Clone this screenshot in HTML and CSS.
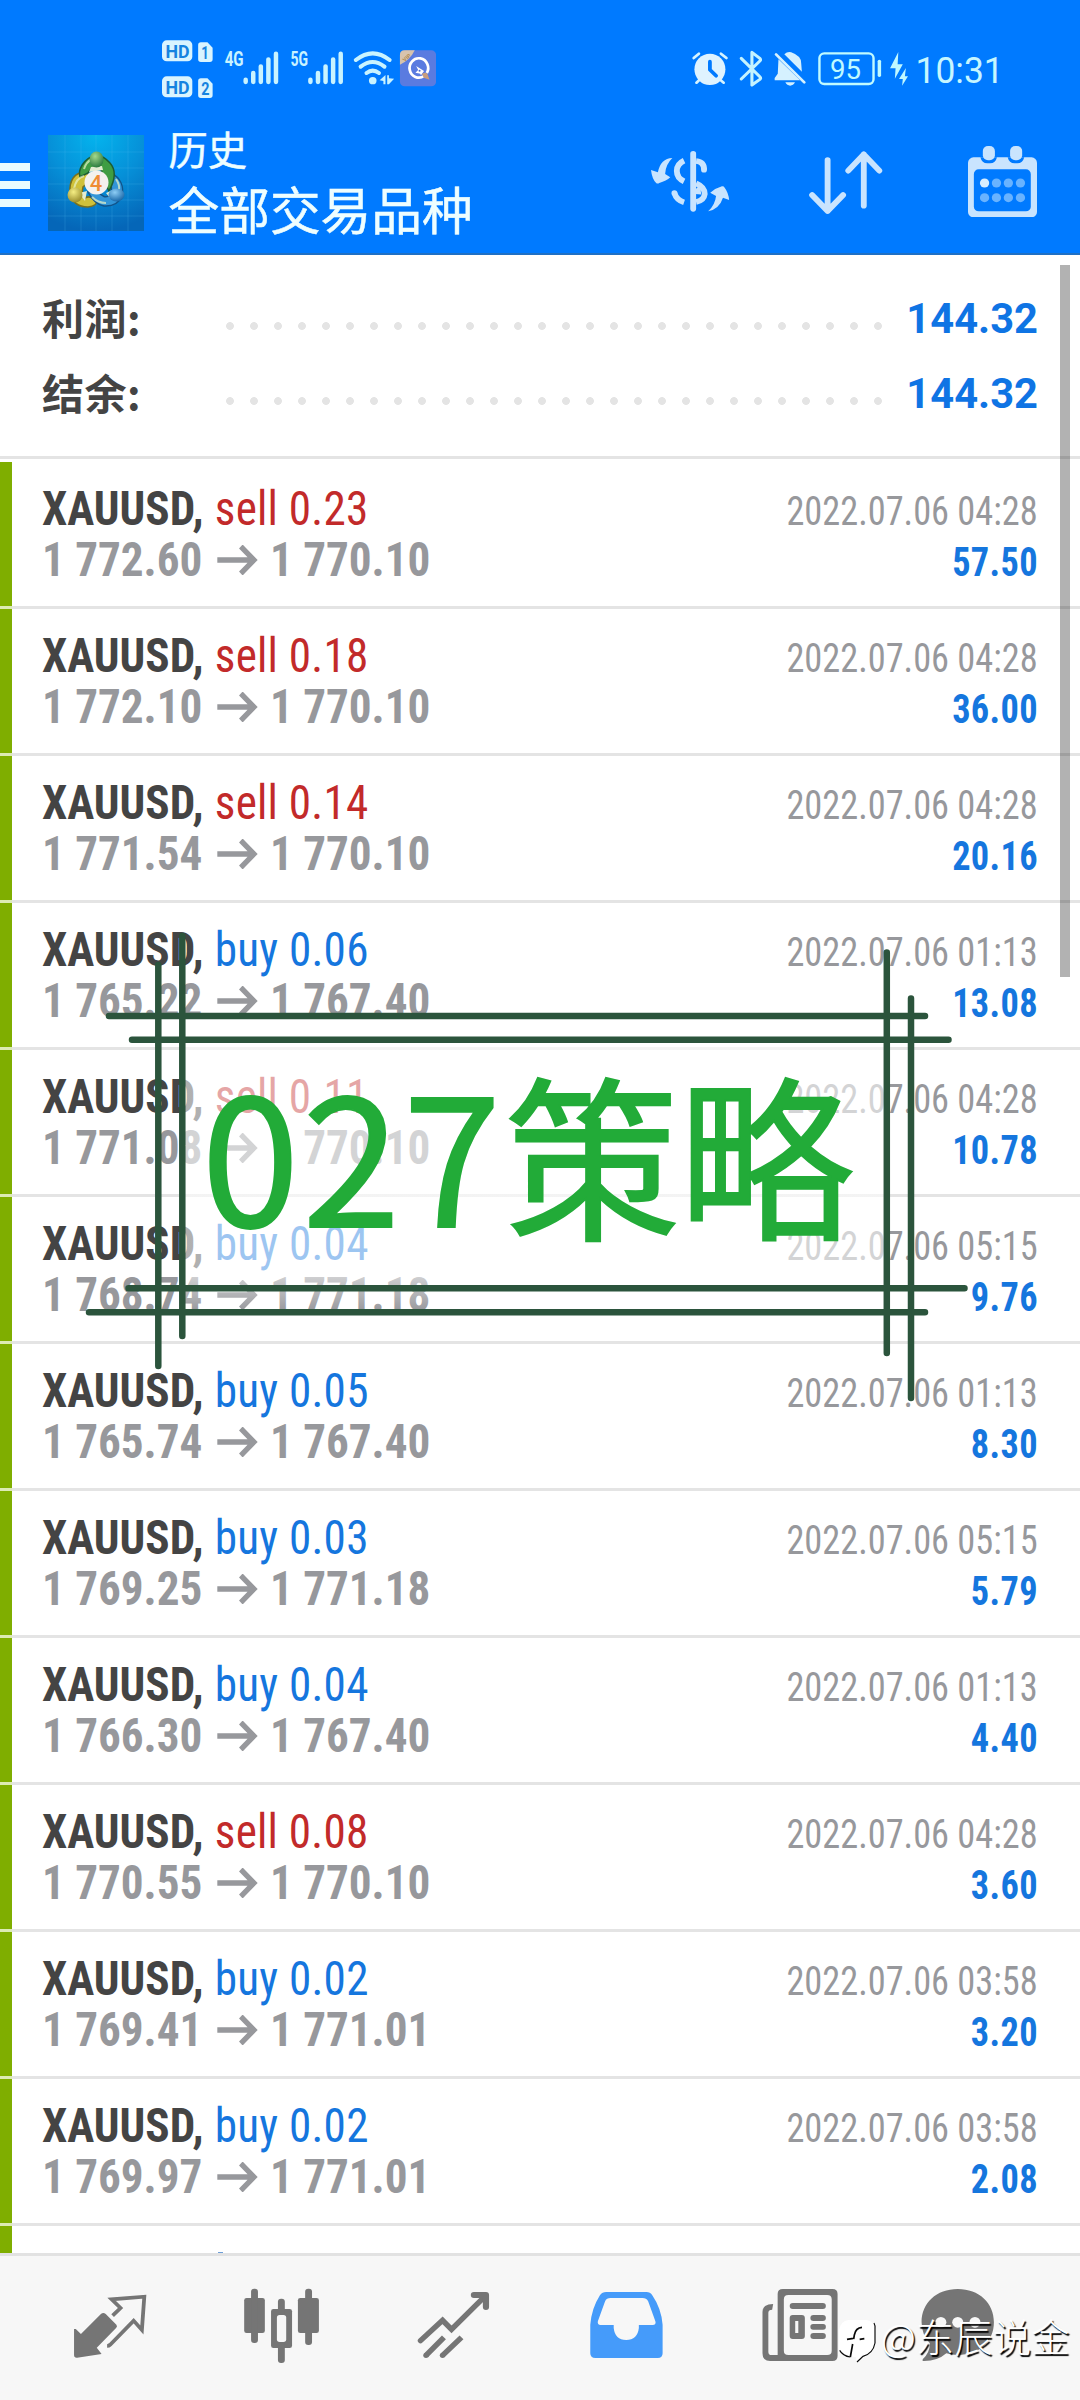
FILE: index.html
```html
<!DOCTYPE html>
<html lang="zh-CN">
<head>
<meta charset="utf-8">
<title>历史</title>
<link rel="stylesheet" href="styles.css">
</head>
<body>
<div class="screen">
<header class="top">
  <div class="status">
    <svg class="status-left" viewBox="470 50 796 190" preserveAspectRatio="none">
      <g fill="#d9f4ff">
        <rect x="470" y="60" width="88" height="63" rx="14"/><rect x="470" y="168" width="88" height="63" rx="14"/>
        <path d="M583 66H602L617 82V117Q617 125 609 125H583Q575 125 575 117V74Q575 66 583 66ZM583 174H602L617 190V225Q617 233 609 233H583Q575 233 575 225V182Q575 174 583 174Z"/>
      </g>
      <g class="badge-text">
        <text x="480" y="112" textLength="70" lengthAdjust="spacingAndGlyphs">HD</text><text x="584" y="115" textLength="22" lengthAdjust="spacingAndGlyphs">1</text>
        <text x="480" y="220" textLength="70" lengthAdjust="spacingAndGlyphs">HD</text><text x="584" y="223" textLength="24" lengthAdjust="spacingAndGlyphs">2</text>
      </g>
      <g class="net-text">
        <text x="652" y="137" textLength="55" lengthAdjust="spacingAndGlyphs">4G</text><text x="843" y="137" textLength="51" lengthAdjust="spacingAndGlyphs">5G</text>
      </g>
      <g stroke="#c9f3ff" stroke-width="13" stroke-linecap="round">
        <path d="M713 178v7M735 158v27M757 138v47M779 117v68M801 100v85M901 178v7M923 158v27M945 138v47M967 117v68M989 100v85"/>
      </g>
      <g fill="none" stroke="#c9f3ff" stroke-width="12" stroke-linecap="round">
        <path d="M1033 119Q1082 79 1131 119M1047 139Q1082 111 1116 139M1064 158Q1082 144 1100 158"/>
      </g>
      <circle cx="1082" cy="181" r="11" fill="#c9f3ff"/>
      <path d="M1102 180L1119 164V192H1113V182ZM1124 165H1129V174L1144 175 1129 192H1124Z" fill="#c9f3ff"/>
      <rect x="1161" y="90" width="105" height="108" rx="14" fill="#5a7be0"/>
      <path d="M1161 133V104Q1161 90 1175 90H1204Q1190 120 1161 133Z" fill="#d7c3ae"/>
      <text class="vip" x="1167" y="121" transform="rotate(-42 1176 112)">VIP</text>
      <path d="M1231 167A27 29 0 1 1 1239 158" fill="none" stroke="#fff" stroke-width="8"/>
      <path d="M1208 137L1231 152 1222 165ZM1206 157L1214 149 1221 160Z" fill="#fff"/><circle cx="1218" cy="151" r="3" fill="#4d6ed4"/>
      <path d="M1225 160Q1240 153 1242 164L1247 178 1230 172Z" fill="#c89d7d"/>
    </svg>
    <svg class="status-right" viewBox="440 90 900 110" preserveAspectRatio="none">
      <g stroke="#d5f3ff" stroke-width="8" stroke-linecap="round"><path d="M445 114L460 101M524 101L540 114M453 188L463 178M532 188L520 178"/></g>
      <ellipse cx="492" cy="148" rx="45" ry="47" fill="#dff3ff"/>
      <path d="M492 125V149L510 167" fill="none" stroke="#007aff" stroke-width="11" stroke-linecap="round" stroke-linejoin="round"/>
      <path d="M583 115L637 170Q641 174 637 178L614 195V97L637 115Q641 119 637 123L583 177" fill="none" stroke="#c4f3ff" stroke-width="9" stroke-linecap="round" stroke-linejoin="round"/>
      <path d="M691 118L754 181H680V174L689 161ZM708 103Q717 94 728 97Q758 108 757 130L759 155ZM711 187H739Q734 197 725 197Q716 197 711 187Z" fill="#d5f1ff"/>
      <path d="M684 103L766 187" stroke="#d5f1ff" stroke-width="8" stroke-linecap="round"/>
      <rect x="810" y="100" width="157" height="92" rx="14" fill="none" stroke="#c0faff" stroke-width="7"/>
      <path d="M984 124v42" stroke="#c0faff" stroke-width="10" stroke-linecap="round"/>
      <text class="battery" x="841" y="176" textLength="90" lengthAdjust="spacingAndGlyphs">95</text>
      <path d="M1039 96L1015 145H1031L1029 176 1052 133H1037ZM1061 144L1041 177H1052L1050 197 1067 169H1058Z" fill="#c0f8ff"/>
      <text class="clock" x="1089" y="189" textLength="256" lengthAdjust="spacingAndGlyphs">10:31</text>
    </svg>
  </div>
  <div class="appbar">
    <div class="burger"><i></i><i></i><i></i></div>
    <svg class="logo" viewBox="0 0 96 96">
      <defs>
        <radialGradient id="sky" cx=".5" cy="0" r="1"><stop offset="0" stop-color="#04b4ee"/><stop offset=".5" stop-color="#0690d8"/><stop offset="1" stop-color="#0566b8"/></radialGradient>
        <radialGradient id="grn" cx=".4" cy=".3" r=".8"><stop offset="0" stop-color="#a5d98c"/><stop offset="1" stop-color="#1c6f35"/></radialGradient>
        <radialGradient id="yel" cx=".4" cy=".3" r=".8"><stop offset="0" stop-color="#f5ee84"/><stop offset="1" stop-color="#8d8020"/></radialGradient>
        <radialGradient id="blu" cx=".4" cy=".3" r=".8"><stop offset="0" stop-color="#8dcdf5"/><stop offset="1" stop-color="#0a5a9e"/></radialGradient>
      </defs>
      <rect width="96" height="96" fill="url(#sky)"/>
      <path d="M0 17H96M0 33H96M0 49H96M0 65H96M0 81H96M17 0V96M33 0V96M48 0V96M64 0V96M80 0V96" stroke="#5cc2f0" stroke-opacity=".2"/>
      <path d="M38 37C26 37 21 46 22 58Q25 72 40 72Q50 71 48 65Q42 60 37 63Q33 60 35 52L44 44Z" fill="#cfc13a" stroke="#77701f" stroke-width="1.500"/>
      <path d="M63 38C73 43 76 52 74 61Q69 72 56 71Q46 69 40 57L50 56Q56 65 62 60Q66 52 60 46Z" fill="#3295d8" stroke="#12548a" stroke-width="1.500"/>
      <path d="M48 20C34 24 30 36 32 42L40 38Q44 32 49 32Q55 33 55 45L61 56Q71 38 62 28Q56 21 48 20Z" fill="#3f9d43" stroke="#1d5c34" stroke-width="1.500"/>
      <path d="M36 34Q38 27 44 24M26 54Q28 43 36 41M68 44Q72 50 71 55M44 62Q50 68 58 68" fill="none" stroke="#e8f4c8" stroke-opacity=".7" stroke-width="2"/>
      <path d="M41 37L55 35 54 31 43 32ZM31 58L37 66 39 56ZM58 58L65 55 62 63Z" fill="#e4ecd0"/>
      <ellipse cx="48.500" cy="24.500" rx="7" ry="8" fill="url(#grn)"/>
      <ellipse cx="27" cy="60" rx="7.500" ry="7.500" fill="url(#yel)"/>
      <ellipse cx="68.500" cy="60" rx="8" ry="6.500" fill="url(#blu)"/>
      <circle cx="48.500" cy="47.500" r="12" fill="#f3f1ee"/>
      <text class="four" x="48" y="55.500" text-anchor="middle">4</text>
    </svg>
    <div class="titles"><div class="title-sm">历史</div><div class="title-lg">全部交易品种</div></div>
    <svg class="ic-dollar" viewBox="322 392 228 183" preserveAspectRatio="none" fill="#c9e4fe">
      <path d="M384 413Q350 414 342 456L322 449Q325 476 337 488Q341 491 346 488Q367 482 378 471L363 461Q364 433 384 413ZM488 573Q521 565 531 532L549 539Q547 517 536 502Q533 497 528 498Q508 504 494 517L511 527Q508 554 488 573Z"/>
      <rect x="436" y="392" width="17" height="182" rx="8.500"/>
      <path d="M418 421Q397 431 397 452Q397 473 418 483M390 518Q396 539 418 546M453 422Q477 425 476 448M453 489Q478 500 478 521Q476 540 453 545M453 505Q460 512 459 522" fill="none" stroke="#c9e4fe" stroke-width="17"/><circle cx="390" cy="518" r="8.500"/><circle cx="476" cy="448" r="8.500"/>
    </svg>
    <svg class="ic-sort" viewBox="782 392 213 190" preserveAspectRatio="none" fill="none" stroke="#c9e4fe" stroke-width="17" stroke-linecap="round" stroke-linejoin="round">
      <path d="M836 419V572M791 524L836 572 881 524M941 556V402M896 451L941 402 986 451"/>
    </svg>
    <svg class="ic-cal" viewBox="1243 377 200 214" preserveAspectRatio="none">
      <rect x="1243" y="411" width="200" height="180" rx="16" fill="#c9e4fe"/>
      <rect x="1260" y="447" width="165" height="126" rx="14" fill="#007aff"/>
      <path d="M1279 411H1327Q1323 429 1307 429H1299Q1283 429 1279 411ZM1358 411H1406Q1402 429 1386 429H1378Q1362 429 1358 411Z" fill="#007aff"/>
      <rect x="1286" y="377" width="35" height="43" rx="15" fill="#c9e4fe"/><rect x="1365" y="377" width="35" height="43" rx="15" fill="#c9e4fe"/>
      <circle cx="1291" cy="488" r="13.500" fill="#d8eeff"/>
      <g fill="#69b3ff"><circle cx="1325.500" cy="488" r="13.500"/><circle cx="1360" cy="488" r="13.500"/><circle cx="1395" cy="488" r="13.500"/><circle cx="1291" cy="532" r="13.500"/><circle cx="1325.500" cy="532" r="13.500"/><circle cx="1360" cy="532" r="13.500"/><circle cx="1395" cy="532" r="13.500"/></g>
    </svg>
  </div>
</header>

<section class="summary">
  <div class="sum-row"><span class="sum-label">利润:</span><span class="dots"></span><span class="sum-value">144.32</span></div>
  <div class="sum-row"><span class="sum-label">结余:</span><span class="dots"></span><span class="sum-value">144.32</span></div>
</section>

<main class="deals">
  <div class="deal"><div class="left"><div class="l1"><b>XAUUSD,</b> <span class="sell">sell 0.23</span></div><div class="l2">1 772.60<svg class="arr" viewBox="0 0 42 30"><path d="M0 15H38M25 1.500L39 15 25 28.500"/></svg>1 770.10</div></div><div class="right"><div class="date">2022.07.06 04:28</div><div class="profit">57.50</div></div></div>
  <div class="deal"><div class="left"><div class="l1"><b>XAUUSD,</b> <span class="sell">sell 0.18</span></div><div class="l2">1 772.10<svg class="arr" viewBox="0 0 42 30"><path d="M0 15H38M25 1.500L39 15 25 28.500"/></svg>1 770.10</div></div><div class="right"><div class="date">2022.07.06 04:28</div><div class="profit">36.00</div></div></div>
  <div class="deal"><div class="left"><div class="l1"><b>XAUUSD,</b> <span class="sell">sell 0.14</span></div><div class="l2">1 771.54<svg class="arr" viewBox="0 0 42 30"><path d="M0 15H38M25 1.500L39 15 25 28.500"/></svg>1 770.10</div></div><div class="right"><div class="date">2022.07.06 04:28</div><div class="profit">20.16</div></div></div>
  <div class="deal"><div class="left"><div class="l1"><b>XAUUSD,</b> <span class="buy">buy 0.06</span></div><div class="l2">1 765.22<svg class="arr" viewBox="0 0 42 30"><path d="M0 15H38M25 1.500L39 15 25 28.500"/></svg>1 767.40</div></div><div class="right"><div class="date">2022.07.06 01:13</div><div class="profit">13.08</div></div></div>
  <div class="deal"><div class="left"><div class="l1"><b>XAUUSD,</b> <span class="sell">sell 0.11</span></div><div class="l2">1 771.08<svg class="arr" viewBox="0 0 42 30"><path d="M0 15H38M25 1.500L39 15 25 28.500"/></svg>1 770.10</div></div><div class="right"><div class="date">2022.07.06 04:28</div><div class="profit">10.78</div></div></div>
  <div class="deal"><div class="left"><div class="l1"><b>XAUUSD,</b> <span class="buy">buy 0.04</span></div><div class="l2">1 768.74<svg class="arr" viewBox="0 0 42 30"><path d="M0 15H38M25 1.500L39 15 25 28.500"/></svg>1 771.18</div></div><div class="right"><div class="date">2022.07.06 05:15</div><div class="profit">9.76</div></div></div>
  <div class="deal"><div class="left"><div class="l1"><b>XAUUSD,</b> <span class="buy">buy 0.05</span></div><div class="l2">1 765.74<svg class="arr" viewBox="0 0 42 30"><path d="M0 15H38M25 1.500L39 15 25 28.500"/></svg>1 767.40</div></div><div class="right"><div class="date">2022.07.06 01:13</div><div class="profit">8.30</div></div></div>
  <div class="deal"><div class="left"><div class="l1"><b>XAUUSD,</b> <span class="buy">buy 0.03</span></div><div class="l2">1 769.25<svg class="arr" viewBox="0 0 42 30"><path d="M0 15H38M25 1.500L39 15 25 28.500"/></svg>1 771.18</div></div><div class="right"><div class="date">2022.07.06 05:15</div><div class="profit">5.79</div></div></div>
  <div class="deal"><div class="left"><div class="l1"><b>XAUUSD,</b> <span class="buy">buy 0.04</span></div><div class="l2">1 766.30<svg class="arr" viewBox="0 0 42 30"><path d="M0 15H38M25 1.500L39 15 25 28.500"/></svg>1 767.40</div></div><div class="right"><div class="date">2022.07.06 01:13</div><div class="profit">4.40</div></div></div>
  <div class="deal"><div class="left"><div class="l1"><b>XAUUSD,</b> <span class="sell">sell 0.08</span></div><div class="l2">1 770.55<svg class="arr" viewBox="0 0 42 30"><path d="M0 15H38M25 1.500L39 15 25 28.500"/></svg>1 770.10</div></div><div class="right"><div class="date">2022.07.06 04:28</div><div class="profit">3.60</div></div></div>
  <div class="deal"><div class="left"><div class="l1"><b>XAUUSD,</b> <span class="buy">buy 0.02</span></div><div class="l2">1 769.41<svg class="arr" viewBox="0 0 42 30"><path d="M0 15H38M25 1.500L39 15 25 28.500"/></svg>1 771.01</div></div><div class="right"><div class="date">2022.07.06 03:58</div><div class="profit">3.20</div></div></div>
  <div class="deal"><div class="left"><div class="l1"><b>XAUUSD,</b> <span class="buy">buy 0.02</span></div><div class="l2">1 769.97<svg class="arr" viewBox="0 0 42 30"><path d="M0 15H38M25 1.500L39 15 25 28.500"/></svg>1 771.01</div></div><div class="right"><div class="date">2022.07.06 03:58</div><div class="profit">2.08</div></div></div>
  <div class="deal next"><span class="tip"></span></div>
</main>

<nav class="tabs">
  <svg viewBox="69.700 168 499.400 432" preserveAspectRatio="none" fill="#757575">
    <path d="M215 387H220L235 402 293 342Q300 336 307 342L338 374Q342 379 337 384L281 443 295 462 224 473Q215 474 215 465Z"/>
    <path d="M327 347L350 324 324 298 419 290 412 390 388 362 320 434Q316 438 311 438" fill="none" stroke="#757575" stroke-width="11"/>
  </svg>
  <svg viewBox="569.100 168 499.400 432" preserveAspectRatio="none" fill="#757575">
    <rect x="709" y="294" width="60" height="105" rx="7"/><rect x="729" y="266" width="20" height="163" rx="9"/>
    <rect x="865" y="294" width="61" height="105" rx="7"/><rect x="886" y="266" width="20" height="169" rx="9"/>
    <rect x="787" y="327" width="61" height="117" rx="7"/><rect x="807" y="296" width="20" height="193" rx="9"/><rect x="804" y="345" width="27" height="81" rx="8" fill="#f7f7f7"/>
  </svg>
  <svg viewBox="1068.500 168 499.400 432" preserveAspectRatio="none" fill="none" stroke="#757575" stroke-width="16">
    <path d="M1221 422L1285 361 1311 388 1410 287" stroke-linecap="round"/><path d="M1376 285H1411V321" stroke-width="18" stroke-linecap="round" stroke-linejoin="round"/>
    <path d="M1237 466L1289 412M1285 466L1340 412"/><g fill="#757575" stroke="none"><circle cx="1237" cy="466" r="8"/><circle cx="1285" cy="466" r="8"/></g>
  </svg>
  <svg viewBox="0 168 499.400 432" preserveAspectRatio="none">
    <path fill="#459bfa" fill-rule="evenodd" d="M192 276H309Q320 276 326 286Q352 325 356 374V460Q356 474 342 474H161Q146 474 146 460V374Q150 325 174 286Q181 276 192 276ZM205 294Q193 294 189 304L168 364Q166 375 176 375H214V384Q218 420 250 420Q283 420 287 384V375H327Q338 375 335 364L314 304Q309 294 298 294Z"/>
  </svg>
  <svg viewBox="499.400 168 499.400 432" preserveAspectRatio="none" fill="#757575">
    <path fill-rule="evenodd" d="M705 267H849Q864 267 864 282V468Q864 483 849 483H668Q646 483 646 460V335Q646 312 677 312L674 329Q663 329 663 338V455Q663 465 672 465H690V282Q690 267 705 267ZM721 285Q708 285 708 298V452Q708 465 721 465H834Q847 465 847 452V298Q847 285 834 285Z"/>
    <rect x="725" y="309" width="105" height="18" rx="9"/><path fill-rule="evenodd" d="M734 345H760Q769 345 769 354V408Q769 417 760 417H734Q725 417 725 408V354Q725 345 734 345ZM741 363V399H750V363Z"/>
    <rect x="785" y="345" width="45" height="18" rx="9"/><rect x="785" y="372" width="45" height="17" rx="8"/><rect x="785" y="399" width="45" height="18" rx="9"/>
  </svg>
  <svg viewBox="998.900 168 499.400 432" preserveAspectRatio="none">
    <path d="M1213 267C1275 267 1318 309 1318 367C1318 425 1275 465 1213 465Q1197 465 1180 460Q1155 483 1115 483Q1108 483 1112 477Q1132 458 1132 430Q1108 403 1108 367C1108 309 1151 267 1213 267Z" fill="#757575"/>
    <g fill="#f7f7f7"><circle cx="1164" cy="367" r="16"/><circle cx="1213" cy="367" r="16"/><circle cx="1263" cy="367" r="16"/></g>
  </svg>
</nav>

<div class="scrollbar"></div>
<div class="veil"></div>
<div class="strategy"><span class="num">027</span>策略</div>
<svg class="frame" viewBox="80 925 900 485" fill="none" stroke="#2b543c" stroke-width="6.500" stroke-linecap="round">
  <path d="M109 1016H925M132 1039.700H948.500M128.500 1288.300H964.500M89 1312.300H925M158.300 965V1366M182.300 936V1336M886.800 952.500V1353M911 998.500V1398"/>
</svg>
<div class="watermark">
  <svg viewBox="55 55 117 137">
    <path d="M86 61H140Q165 64 166 90V130Q160 164 130 170L112 187 108 172Q70 172 58 150V92Q62 64 86 61Z" fill="#fff"/>
    <path d="M163 70Q167 76 166 90V130Q160 162 130 170L112 187M60 152Q70 169 92 172" fill="none" stroke="#0a0a0a" stroke-width="3.500"/>
    <path d="M127 83Q108 84 104 106L102 118M82 119L101 116M120 119L134 117M99 133L92 172" fill="none" stroke="#0a0a0a" stroke-width="5"/>
  </svg>
  <span>@东辰说金</span>
</div>
</div>
</body>
</html>
```
FILE: styles.css
```css
* { box-sizing: border-box; }
body { margin: 0; background: #fff; font-family: Roboto, "Noto Sans CJK SC", sans-serif; }
.screen { position: relative; width: 1080px; height: 2400px; overflow: hidden; display: flex; flex-direction: column; }
svg { display: block; flex: none; }

.top { height: 255px; flex: none; background: #007aff; border-bottom: 2px solid #2070c4; }
.status { display: flex; height: 125px; padding: 36.7px 78.500px 0 161.900px; justify-content: space-between; align-items: flex-start; }
.status-left { width: 274.100px; height: 63.300px; }
.status-right { width: 310px; height: 36.700px; margin-top: 13.300px; overflow: visible; }
.badge-text { font: 700 55px Roboto, sans-serif; fill: #1683e0; }
.net-text { font: 700 58px Roboto, sans-serif; fill: #c9f3ff; }
.vip { font: 700 16px Roboto, sans-serif; fill: #b08a50; }
.battery { font: 400 82px Roboto, sans-serif; fill: #c0faff; }
.clock { font: 400 113px Roboto, sans-serif; fill: #c6f6ff; }

.appbar { display: flex; align-items: flex-start; height: 128px; }
.burger { width: 30px; margin: 37.700px 18px 0 0; display: flex; flex-direction: column; gap: 10px; }
.burger i { height: 8px; background: #e8fbff; }
.logo { width: 96px; height: 96px; margin-top: 10px; }
.four { font: 500 22px Roboto, sans-serif; fill: #ef8c34; }
.titles { width: 482px; margin-left: 24.500px; margin-top: -2px; color: #eefeff; font-family: "Noto Sans CJK SC", sans-serif; white-space: nowrap; -webkit-text-stroke: .5px #eefeff; }
.title-sm { font-size: 39.300px; line-height: 50px; }
.title-lg { font-size: 50.700px; line-height: 62px; margin-top: 4px; }
.ic-dollar { width: 78.500px; height: 61px; margin: 25.700px 0 0 .5px; }
.ic-sort { width: 73.400px; height: 63.300px; margin: 25.700px 0 0 79.900px; }
.ic-cal { width: 69px; height: 71.300px; margin: 20.700px 0 0 85.400px; }

.summary { flex: none; height: 204px; border-bottom: 3px solid #e4e4e4; padding: 26px 42px 0; color: #444; }
.sum-row { display: flex; height: 75px; align-items: center; }
.sum-label { width: 182px; margin-top: -5px; font: 700 42px/75px "Noto Sans CJK SC", sans-serif; letter-spacing: .5px; }
.dots { width: 672px; height: 8px; margin-top: 14px; background: radial-gradient(circle at 12px 4px, #e4e4e4 3.500px, transparent 4.300px) -6px 0 / 24px 8px; }
.sum-value { margin-left: auto; font: 700 41.700px/75px Roboto, sans-serif; color: #0f74e4; }

.deals { flex: none; height: 1794px; margin-top: 3px; overflow: hidden; }
.deal { display: flex; justify-content: space-between; height: 147px; padding-right: 42px; border-left: 12px solid #7fae00; position: relative; font-stretch: 75%; white-space: nowrap; }
.deal::after { content: ""; position: absolute; left: -12px; right: 0; bottom: 0; height: 3px; background: linear-gradient(90deg, #dcebb4 12px, #e4e4e4 12px); }
.left { padding: 21.400px 0 0 30px; font-size: 48px; line-height: 51px; transform: scaleX(.94); transform-origin: 30px 0; }
.l1 b { color: #444; }
.sell, .buy { margin-left: 1px; letter-spacing: .25px; }
.sell { color: #c22a2a; }
.buy { color: #1576de; }
.l2 { display: flex; align-items: center; font-weight: 700; color: #97989c; }
.arr { width: 45px; height: 30px; margin: 0 13px 0 14px; }
.arr path { fill: none; stroke: #97989c; stroke-width: 5.500; }
.right { padding-top: 24px; font-size: 40px; line-height: 51px; text-align: right; transform: scaleX(.908); transform-origin: 100% 0; }
.date { color: #97989c; }
.profit { color: #1576de; font-weight: 700; letter-spacing: .4px; margin-right: -.4px; }
.tip { width: 5px; height: 1px; margin: 26px 0 0 206px; background: #6f9fd8; }

.tabs { flex: none; position: relative; height: 147px; display: grid; grid-template-columns: repeat(6, 172px); padding-left: 24px; background: #f7f7f7; border-top: 3px solid #e2e2e2; margin-top: -3px; }
.tabs svg { width: 172px; height: 144px; }

.scrollbar { position: absolute; left: 1060px; top: 265px; width: 10px; height: 712px; background: rgba(0, 0, 0, .3); }
.veil { position: absolute; left: 182px; top: 1040px; width: 706px; height: 272px; background: linear-gradient(rgba(255, 255, 255, .58) 86%, rgba(255, 255, 255, 0)); }
.strategy { position: absolute; left: 201.500px; top: 1041px; font: 400 176px/220px "Noto Sans CJK SC", sans-serif; color: #22ab38; letter-spacing: -2px; -webkit-text-stroke: 1.800px #22ab38; white-space: nowrap; }
.strategy .num { letter-spacing: 3.200px; }
.frame { position: absolute; left: 80px; top: 925px; width: 900px; height: 485px; }
.watermark { position: absolute; left: 838.300px; top: 2310px; display: flex; align-items: flex-start; }
.watermark svg { width: 39px; height: 45.700px; margin-top: 8.300px; }
.watermark span { font: 300 38.500px/50px "Noto Sans CJK SC", sans-serif; color: #fff; text-shadow: 1.500px 1.500px 1px #000; margin-left: 3.500px; white-space: nowrap; }
```
